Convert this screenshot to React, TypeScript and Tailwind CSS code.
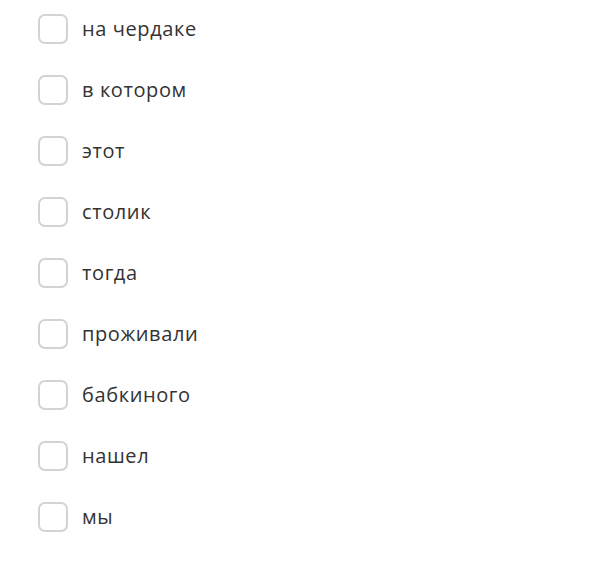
const words = [
  'на чердаке',
  'в котором',
  'этот',
  'столик',
  'тогда',
  'проживали',
  'бабкиного',
  'нашел',
  'мы',
];

export default function App() {
  return (
    <div className="min-h-[583px] w-[611px] bg-white pl-[38px] pt-[14px] font-['Open_Sans','Noto_Sans',sans-serif]">
      <div className="flex flex-col gap-[31px]">
        {words.map(w => (
          <label key={w} className="flex h-[30px] items-center gap-[14px]">
            <span className="h-[30px] w-[30px] shrink-0 rounded-[7px] border-2 border-[#d3d3d3] bg-white"></span>
            <span className="text-[20px] leading-none tracking-[0.6px] text-[#333333]">{w}</span>
          </label>
        ))}
      </div>
    </div>
  );
}
